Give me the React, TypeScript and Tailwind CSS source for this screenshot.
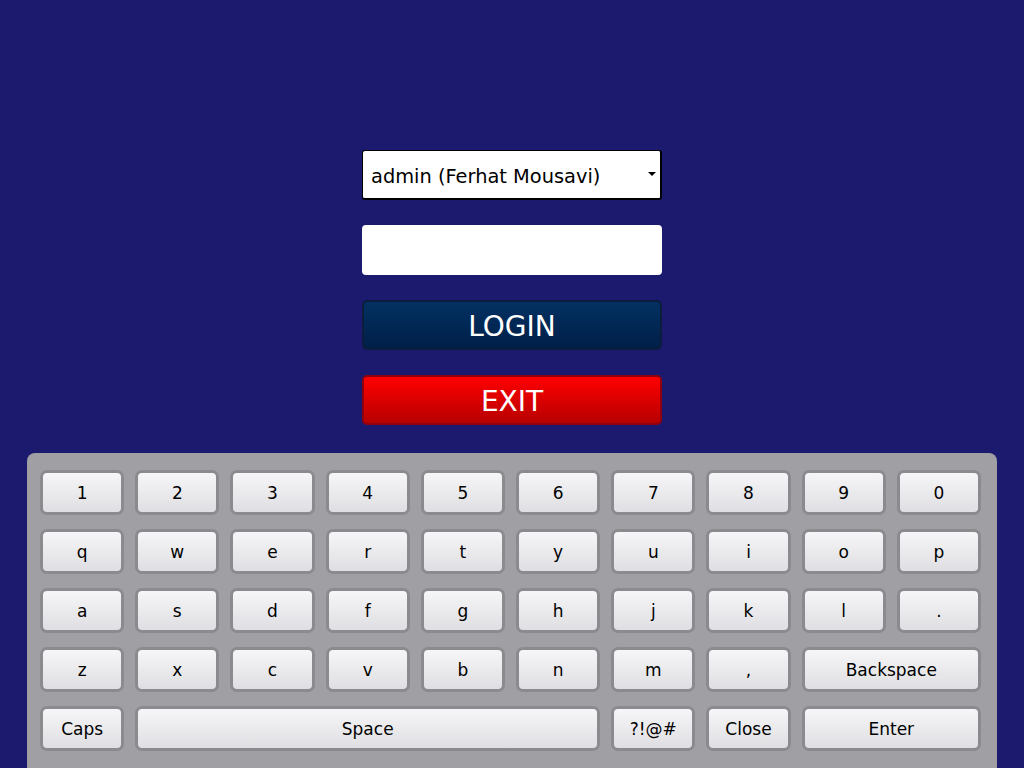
import { ReactNode } from "react";

const Key = ({ children, span }: { children: ReactNode; span?: string }) => {
  return (
    <button
      className={`${span ?? ""} h-[45px] rounded-[7px] border-[3px] border-[#8b8b8f] bg-gradient-to-b from-[#f6f6f8] to-[#dfdfe3] text-[17px] text-black flex items-center justify-center pt-[2px]`}
    >
      {children}
    </button>
  );
};

const rows = [
  ["1", "2", "3", "4", "5", "6", "7", "8", "9", "0"],
  ["q", "w", "e", "r", "t", "y", "u", "i", "o", "p"],
  ["a", "s", "d", "f", "g", "h", "j", "k", "l", "."],
];

const App = () => {
  return (
    <div
      className="w-[1024px] h-[768px] overflow-hidden bg-[#1b1a6f] flex flex-col items-center"
      style={{ fontFamily: '"DejaVu Sans", Verdana, sans-serif' }}
    >
      {/* Login form */}
      <div className="mt-[150px] w-[300px] flex flex-col gap-[25px]">
        <div className="relative h-[50px] bg-white border border-black rounded-[3px] border-r-2 border-b-2 flex items-center pl-[8px] pt-[4px] text-[19.4px] text-black">
          admin (Ferhat Mousavi)
          <span className="absolute right-[4px] top-[21px] w-0 h-0 border-l-[4px] border-r-[4px] border-t-[4px] border-l-transparent border-r-transparent border-t-black" />
        </div>
        <div className="h-[50px] bg-white rounded-[4px]" />
        <button className="h-[50px] rounded-[5px] border-2 border-[#0b1c3d] bg-gradient-to-b from-[#033162] to-[#001f48] text-white text-[28px] pt-[4px]">
          LOGIN
        </button>
        <button className="h-[50px] rounded-[5px] border-2 border-[#8e0010] bg-gradient-to-b from-[#ff0000] to-[#b80000] text-white text-[28px] pt-[4px]">
          EXIT
        </button>
      </div>

      {/* On-screen keyboard */}
      <div className="mt-[28px] w-[970px] bg-[#a09fa4] rounded-t-[8px] pl-[13px] pr-[16px] pt-[17px] pb-[30px]">
        <div className="grid grid-cols-10 gap-x-[11px] gap-y-[14px]">
          {rows.flat().map((k, i) => (
            <Key key={i}>{k}</Key>
          ))}
          {["z", "x", "c", "v", "b", "n", "m", ","].map((k) => (
            <Key key={k}>{k}</Key>
          ))}
          <Key span="col-span-2">Backspace</Key>
          <Key>Caps</Key>
          <Key span="col-span-5">Space</Key>
          <Key>?!@#</Key>
          <Key>Close</Key>
          <Key span="col-span-2">Enter</Key>
        </div>
      </div>
    </div>
  );
};

export default App;
